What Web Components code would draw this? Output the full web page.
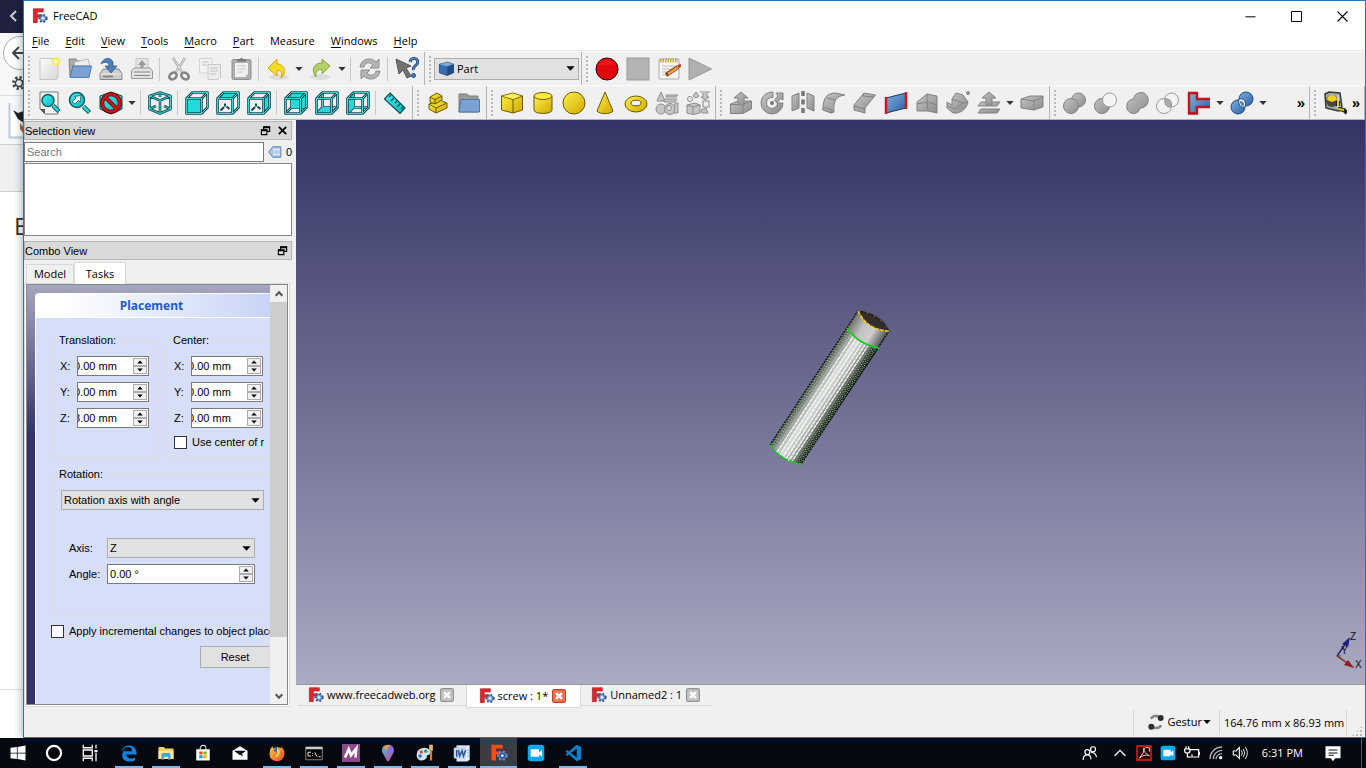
<!DOCTYPE html>
<html lang="en">
<head>
<meta charset="utf-8">
<title>FreeCAD</title>
<style>
html,body{height:100%;margin:0;overflow:hidden}
body{font:11px/14px "Liberation Sans",Arial,sans-serif;color:#000;background:#fff}
</style>
</head>
<body>
<cad-desktop></cad-desktop>
<script>
const RESET='*{box-sizing:border-box}button,input,select{font:inherit;color:inherit;margin:0}button{background:none;border:0;padding:0}';
const define=(name,html,setup)=>customElements.define(name,class extends HTMLElement{
  constructor(){
    super();
    const root=this.attachShadow({mode:'open'});
    root.innerHTML='<style>'+RESET+(typeof html==='function'?html(this):html);
    if(setup)setup(this,root);
  }
});

/* ---------- icon library, 24 x 24 grid ---------- */
const grad=(id,a,b)=>`<linearGradient id="${id}" x1="0" y1="0" x2="1" y2="1"><stop stop-color="${a}"/><stop offset="1" stop-color="${b}"/></linearGradient>`;
const DEFS='<defs>'+grad('te','#3ff0f0','#12b5bd')+grad('gr','#c4c4c4','#8c8c8c')+grad('gl','#fbfbfb','#d8d8d8')+grad('ye','#fff04a','#d0a800')+grad('bl','#7fb0e4','#2c5f9f')+grad('fx','#ffd22e','#f0403a')+grad('p3','#29c7f0','#e83a86')+'</defs>';
const wire=d=>`<path d="${d}" fill="none" stroke="#0c4c50" stroke-width="2.600" stroke-linejoin="round"/><path d="${d}" fill="none" stroke="#4fe0e2" stroke-width=".9"/>`;
const cubeWire='M1.500 7.500H16.500V22.500H1.500ZM16.500 7.500L22.500 1.500H7.500L1.500 7.500M22.500 1.500V16.500L16.500 22.500';
const cubeBack='M7.500 1.500V16.500H22.500M7.500 16.500L1.500 22.500';
const cube=(face,back)=>`${back?wire(cubeBack):''}<path d="${face}" fill="#26d7dc"/>${back?'':`<path d="M17.500 9L21.500 5V15.500L17.500 20Z" fill="#f4f4f4"/>`}${back?'':`<path d="${face}" fill="#26d7dc"/>`}${wire(cubeWire)}`;
const dots='<path d="M4.500 19.500L8 16M9 15.500V12.500M10.500 15.500L13.500 18" stroke="#0c4c50" stroke-width="2"/>';
const gear=(cx,cy,r,fill,st)=>`<circle cx="${cx}" cy="${cy}" r="${r}" fill="none" stroke="${st}" stroke-width="4" stroke-dasharray="2.400 2.300"/><circle cx="${cx}" cy="${cy}" r="${r-.5}" fill="${fill}" stroke="${st}"/><circle cx="${cx}" cy="${cy}" r="1.800" fill="#fff"/>`;
const fc=gearFill=>`<path d="M2 1H17V6H8V10H14V14H8V22H2Z" fill="#e0252b" stroke="#8e1216" stroke-width=".8"/>`+gear(16.5,15.5,5,gearFill,'#33568c');
const G='fill="url(#gr)" stroke="#828282"', Y='fill="url(#ye)" stroke="#6b5b00"';
const magn=(x,y,r)=>`<path d="M${x+r-1} ${y+r-1}L${x+r+5} ${y+r+5}" stroke="#0c4c50" stroke-width="4.500"/><path d="M${x+r-1} ${y+r-1}L${x+r+4.5} ${y+r+4.5}" stroke="#2cd4d8" stroke-width="2.500"/><circle cx="${x}" cy="${y}" r="${r}" fill="url(#te)" stroke="#0c5c60" stroke-width="1.500"/>`;
const ICONS={
new:'<path d="M3 1.500H21V21L19 22.500H3Z" fill="url(#gl)" stroke="#c6c6c6"/><circle cx="19" cy="4.500" r="4.500" fill="#f7ef48" opacity=".75"/><circle cx="19" cy="4.500" r="2" fill="#fffbb0"/>',
open:'<path d="M1 2H8L10 4H20V8H5L3 20H2Z" fill="#aaa" stroke="#858585"/><path d="M7 5L20 2L22 9H6Z" fill="#eee" stroke="#bbb"/><path d="M5 9H23.500L21 20.500H2Z" fill="#7ba2d2" stroke="#5079ad"/>',
save:'<path d="M4 12H20L23 17V22.500H1V17Z" fill="#ccc" stroke="#888"/><path d="M1.500 17H22.500" stroke="#eee"/><path d="M4 19.500H14" stroke="#888" stroke-width="2"/><path d="M2 7C4 1 11 -1 14 5V9H18L12 16L6 9H10C10 5 6 4 2 7Z" fill="#4f7fbd" stroke="#2e568c" stroke-width=".8"/>',
print:'<path d="M6 1.500H18V12H6Z" fill="#e4e4e4" stroke="#c4c4c4"/><path d="M12 3L8 8H10.500V11H13.500V8H16Z" fill="#999"/><path d="M4 11H20L22.500 14V21.500H1.500V14Z" fill="#e2e2e2" stroke="#999"/><path d="M4 15H20M4 18.500H20" stroke="#888" stroke-width="1.200"/>',
cut:'<path d="M6 1L15 15M18 1L9 15" stroke="#aaa" stroke-width="2.500"/><path d="M6 1L15 15M18 1L9 15" stroke="#e3e3e3" stroke-width="1"/><g fill="none" stroke="#858585" stroke-width="2.600"><ellipse cx="6" cy="19" rx="4" ry="3" transform="rotate(-35 6 19)"/><ellipse cx="18" cy="19" rx="4" ry="3" transform="rotate(35 18 19)"/></g>',
copy:'<path d="M1.500 1.500H14V16H1.500Z" fill="#f2f2f2" stroke="#d4d4d4"/><path d="M10 7.500H22.500V20L20 22.500H10Z" fill="#ececec" stroke="#c8c8c8"/><path d="M4 5H11M4 8H9M12 11H20M12 14H20M12 17H18" stroke="#d0d0d0" stroke-width="1.500"/>',
paste:'<rect x="3" y="2.500" width="19" height="20" rx="1.500" fill="#aeaeae" stroke="#8f8f8f"/><path d="M6 6H19V17L16 20H6Z" fill="#f1f1f1"/><path d="M8 9H17M8 12H17M8 15H14" stroke="#ccc"/><path d="M8 4.500H17V2H14L12.500 .5L11 2H8Z" fill="#777"/>',
undo:'<ellipse cx="13" cy="20" rx="10" ry="3" fill="#bbb" opacity=".35"/><path d="M2 11L11 2V7C19 7 21 16 15 21C17 15 15 13 11 13.500V19Z" fill="#f5dc28" stroke="#d9a400"/>',
redo:'<ellipse cx="11" cy="20" rx="10" ry="3" fill="#bbb" opacity=".35"/><path d="M21 9L13 2V6C4 6 2 14 7 20C6 14 9 12 13 12.500V17Z" fill="#b4d06a" stroke="#83a83d"/>',
refresh:'<g fill="#b5b5b5" stroke="#8e8e8e"><path d="M2 10C3 1 14 0 18 5L21 2V11H12L15 8C11 4 7 6 6 10Z"/><path d="M22 14C21 23 10 24 6 19L3 22V13H12L9 16C13 20 17 18 18 14Z"/></g>',
what:'<path d="M1 2L16 9L11 11L16 19L12 21L8 13L4 17Z" fill="#71756f" stroke="#555"/><path d="M15 5C16 -.5 24 1 22.500 6C22 9 18 8 18.500 13" fill="none" stroke="#20477a" stroke-width="3"/><path d="M15 5C16 -.5 24 1 22.500 6C22 9 18 8 18.500 13" fill="none" stroke="#5d8bc5" stroke-width="1.200"/><circle cx="18.500" cy="18.500" r="2" fill="#477bb8" stroke="#20477a"/>',
part:'<path d="M2 6L14 3L22 6V18L13 22L2 18Z" fill="#356daf" stroke="#16335a"/><path d="M2 6L14 3L22 6L13 9Z" fill="#78a8dc"/><path d="M13 9L22 6V18L13 22Z" fill="#234b80"/>',
record:'<circle cx="12" cy="12" r="11" fill="#e1080d" stroke="#250000" stroke-width="1"/><path d="M3 9C6 0 18 0 21 9C15 6 9 8 3 9Z" fill="#f33" opacity=".35"/>',
stop:'<rect x="1" y="1" width="22" height="22" fill="#b3b3b3" stroke="#999"/>',
macro:'<rect x="2" y="2" width="20" height="20" rx="1" fill="#f5f5f2" stroke="#aaa"/><path d="M3 3.500H21" stroke="#c7ad24" stroke-width="4" stroke-dasharray="1.500 1"/><path d="M5 9H18M5 12H16M5 15H14M5 18H12" stroke="#bbb"/><path d="M9 18L21 10" stroke="#774315" stroke-width="4"/><path d="M11 17L22 9.500" stroke="#f19b42" stroke-width="2.500"/><path d="M21 10L24 8" stroke="#c33" stroke-width="3"/>',
play:'<path d="M1 1L23.500 12L1 23Z" fill="#b0b0b0" stroke="#999"/>',
fit:'<path d="M3 1H21V23H8L3 18Z" fill="#f4f4f4" stroke="#777"/><path d="M3 18H8V23Z" fill="#555"/>'+magn(11,9.5,6),
fitsel:magn(9,9,7.5)+'<path d="M4 11L8 7L6.500 5.500L13 4.500L12 11L10.500 9.500L7 13Z" fill="#fff" stroke="#0c5c60" stroke-width=".8"/>',
style:'<path d="M12 1L23 5V18L12 23L1 18V5Z" fill="url(#te)" stroke="#0c4c50"/><circle cx="12" cy="12" r="8.800" fill="none" stroke="#5e0808" stroke-width="4"/><path d="M6 6L18 18" stroke="#5e0808" stroke-width="4"/><circle cx="12" cy="12" r="8.800" fill="none" stroke="#d31217" stroke-width="2.500"/><path d="M6 6L18 18" stroke="#d31217" stroke-width="2.500"/>',
axo:wire('M12 1.500L22.500 5V18L12 22.500L1.500 18V5ZM1.500 5L12 9.500L22.500 5M12 9.500V22.500M12 1.500V6M1.500 18L8 15M22.500 18L16 15'),
front:cube('M2 7.500H16V22H2Z'),
top:cube('M2 7.500L8 2H22L16 7.500Z')+dots,
right:cube('M16.500 7.500L22.500 1.500V16.500L16.500 22.500Z')+dots,
rear:cube('M7.500 2H22V16.500H7.500Z',1),
bottom:cube('M2 22L8 16.500H22L16 22Z',1),
left:cube('M2 7.500L8 2V16.500L2 22Z',1),
ruler:'<path d="M7 2L22 17L17 22.500L1.500 8Z" fill="url(#te)" stroke="#0c4c50" stroke-width="1.200"/><path d="M8 4L6 6M11 7L8 10M14 10L12 12M17 13L14 16M20 16L18 18" stroke="#0c4c50" stroke-width="1.300"/>',
group:`<g ${Y}><path d="M3 13L14 9L21 12V17L10 22L3 18Z"/><path d="M3 13L10 17V22M10 17L21 12" fill="none"/><path d="M4 6L11 2L16 5V9L9 13L4 11Z"/><path d="M4 6L9 8.500V13M9 8.500L16 5" fill="none"/></g>`,
folder:'<path d="M2 3H10L12 5H21V21H2Z" fill="#999" stroke="#7e7e7e"/><path d="M4 8.500H22.500V21H2L4 8.500Z" fill="#7ba2d2" stroke="#4f78ac"/>',
box:`<g ${Y}><path d="M1.500 5L13 2L22.500 5V19L13 22L1.500 19Z"/><path d="M1.500 5L13 8.500V22M13 8.500L22.500 5" fill="none"/></g><path d="M2.500 5L13 2.500L21 5L13 8Z" fill="#ffee55"/>`,
cyl:`<path d="M3 5V19C3 23.500 21 23.500 21 19V5" ${Y}/><ellipse cx="12" cy="5" rx="9" ry="3.500" fill="#ffea3c" stroke="#6b5b00"/>`,
sphere:`<circle cx="12" cy="12" r="11" ${Y}/>`,
cone:`<path d="M12 1L20 20C18 23.500 6 23.500 4 20Z" ${Y}/>`,
torus:`<ellipse cx="12" cy="13" rx="11" ry="8" ${Y}/><ellipse cx="12" cy="12" rx="5" ry="2.800" fill="#f5f5f5" stroke="#6b5b00"/>`,
prims:`<g fill="#c6c6c6" stroke="#909090"><path d="M6 1L10 10H2Z"/><path d="M11 4H23L21 6H11Z"/><path d="M9 8H22L20 11H9Z"/><circle cx="6" cy="18" r="5"/><circle cx="15" cy="18" r="5.500"/><circle cx="14" cy="17" r="2.500" fill="#ddd"/><path d="M20 12H23V22H19Z"/></g>`,
shapes:`<g fill="#c6c6c6" stroke="#8c8c8c"><path d="M1 14L9 12L14 14V22L7 23.500L1 22Z"/><path d="M1 14L7 16V23M7 16L14 14" fill="none"/><path d="M14 1H24M17 2V6H15L19 9L23 6H21V2"/><rect x="17" y="10" width="6" height="6" fill="#eee"/><path d="M15 19L20 17L22 22L16 22Z"/><circle cx="4" cy="8" r="2.500" fill="#eee"/><path d="M7 5L10 1L13 5L10 7Z"/></g>`,
extrude:`<g ${G}><path d="M1.500 13L9 10H22.500V18L14 22.500H1.500Z"/><path d="M1.500 13.500H14V22M14 13.500L22 10" fill="none"/><path d="M12 1L19 7H15V14H9V7H5Z"/></g>`,
revolve:`<path d="M13 1V6.500A5.500 5.500 0 1 0 17.500 12H23A11 11 0 1 1 13 1Z" ${G}/><path d="M16 2H23V9L20.500 7.500L17 12L14.500 9L18 5Z" ${G}/><circle cx="12" cy="12" r="2" fill="#777"/>`,
mirror:`<g ${G}><path d="M1 5L8 2V17L1 20Z"/><path d="M16 2L23 5V20L16 17Z"/></g><path d="M12 0V24" stroke="#777" stroke-width="3.500" stroke-dasharray="5 3.500"/>`,
fillet:`<g ${G}><path d="M1 19C1 6 5 2 14 2L23 4C14 5 11 10 12 21L9 22Z"/><path d="M1 16L10 19V22L1 19ZM5 7L14 9" /></g>`,
chamfer:`<g ${G}><path d="M1 14L11 2L22.500 4L12 17V22L1 19Z"/><path d="M1 15L12 18M11 2L10 5L21 6" fill="none"/></g>`,
ruled:'<path d="M2 7L22 2V17L2 22Z" fill="url(#bl)" stroke="#1b3960"/><path d="M2 6V23M22 1V18" stroke="#d4141a" stroke-width="2.500"/>',
loft:`<g ${G}><path d="M2 11L12 3L22 5V22L13 20H2Z"/><path d="M12 3V11L22 14M2 13L12 11L13 20" fill="none"/></g>`,
sweep:`<g ${G}><path d="M6 8L10 2L17 4L22 11C21 18 14 23 7 22L1 17V11L6 14Z"/><path d="M6 8L17 12L22 11M1 15L9 18L17 12" fill="none"/><circle cx="22" cy="2" r="1.500"/></g>`,
offset:`<g ${G}><path d="M4 11H23L20 15H1ZM4 18H23L20 22H1Z"/><path d="M12 1L19 7H15V14H9V7H5Z"/></g>`,
thick:`<g ${G}><path d="M1 8L10 5H23V16L14 19L1 17Z"/><path d="M1 8L14 10V19M14 10L23 6" fill="none"/></g>`,
boolean:`<circle cx="15.500" cy="9" r="7" ${G}/><circle cx="8" cy="15" r="7.500" ${G}/>`,
bcut:`<circle cx="8" cy="15" r="7.500" ${G}/><circle cx="15.500" cy="9" r="7" fill="#f5f5f5" stroke="#999"/>`,
fuse:`<path d="M2 14C0 23 13 26 15 17C24 17 26 6 19 2C13 0 8 5 9 8C5 8 2 11 2 14Z" ${G}/>`,
common:`<circle cx="15.500" cy="9" r="7" fill="#f3f3f3" stroke="#999"/><circle cx="8" cy="15" r="7.500" fill="#f3f3f3" stroke="#999"/><path d="M9 8C14 7 17 12 15 16C10 17 8 12 9 8Z" fill="#aaa" stroke="#999"/>`,
join:'<path d="M2 2H10V8H23V16H10V23H2Z" fill="url(#bl)"/><path d="M2 1V23M1 2H11M1 22.500H11M10 2V8H23M10 23V16H23" fill="none" stroke="#c51118" stroke-width="2.400"/>',
split:'<g fill="url(#bl)" stroke="#204a7e"><circle cx="16" cy="8" r="7"/><circle cx="8" cy="16" r="7"/></g><path d="M9 8C14 7 17 11 15 16C10 17 8 13 9 8Z" fill="#fff" stroke="#204a7e"/><path d="M10 10C14 10 14 13 14 15C11 15 10 13 10 10Z" fill="#4e83bd"/>',
tape:'<path d="M2 3L6 1L17 2L19 16L15 20L3 17Z" fill="#a6aaa4" stroke="#343832" stroke-width="1.500"/><circle cx="9" cy="10" r="6" fill="#45493f"/><path d="M4 9A5 5 0 0 1 14 9L9 11Z" fill="#edd11c"/><path d="M15 4V17" stroke="#dedede" stroke-width="1.500"/><path d="M15 10V15M15 18L21 19L24 22" stroke="#222" stroke-width="4"/><path d="M15 10V15M15 18L21 19" stroke="#e6c913" stroke-width="2"/>',
freecad:fc('#7fa8df'), freecadDark:'<path d="M2 1H17V6H8V10H14V14H8V22H2Z" fill="#ff4a14"/>'+gear(16.5,15.5,5,'#274d8d','#5f93dd'),
erase:'<path d="M1 12L8 3H22V21H8Z" fill="#a8c6e8" stroke="#557ba8" stroke-width="1.500"/><path d="M10 7L19 17M19 7L10 17" stroke="#fff" stroke-width="4"/><path d="M11 8L18 16M18 8L11 16" stroke="#6b92be" stroke-width="1.500"/>',
gesture:'<path d="M4 7Q11 0 17 5M20 17Q15 23 7 20" fill="none" stroke="#888" stroke-width="4"/><circle cx="19" cy="6" r="4.500" fill="#2b3132"/><circle cx="5" cy="19" r="4.500" fill="#2b3132"/>',
win:'<path d="M2 5L10.500 4V11.500H2ZM11.500 4L22 2V11.500H11.500ZM2 12.500H10.500V20L2 19ZM11.500 12.500H22V22L11.500 20Z" fill="#fff"/>',
cortana:'<circle cx="12" cy="12" r="8.500" fill="none" stroke="#fff" stroke-width="2.600"/>',
tasks:'<path d="M3 1V5H15V1M3 23V19H15V23M3 8H15V16H3ZM20 1V6M20 12V23" fill="none" stroke="#fff" stroke-width="1.700"/><path d="M18 8H22V11H18Z" fill="#fff"/>',
edge:'<path d="M2 11C3 -1 21 -1 22 11V14H8C9 20 16 20 20 18V22C10 26 2 21 3 14C4 9 8 6 11 6C7 7 6 9 6 9.500H16C16 2 6 2 2 11Z" fill="#0b82df"/>',
explorer:'<path d="M2 4H9L11 6H22V20H2Z" fill="#f5cf5d"/><path d="M2 9H22V20H2Z" fill="#ffe594"/><path d="M6 21V14Q6 12 8 12H16Q18 12 18 14V21H15V17H9V21Z" fill="#3ea7e2"/>',
store:'<path d="M8 7Q9 1 12 2Q16 1 16 7" fill="none" stroke="#ddd" stroke-width="1.500"/><path d="M3 7H21V22H3Z" fill="#fff"/><path d="M7 10H11.500V14H7Z" fill="#f25022"/><path d="M12.500 10H17V14H12.500Z" fill="#7fba00"/><path d="M7 15H11.500V19H7Z" fill="#00a4ef"/><path d="M12.500 15H17V19H12.500Z" fill="#ffb900"/>',
mail:'<path d="M2 9L12 3L22 9V21H2Z" fill="#fff"/><path d="M4 9H20L12 15Z" fill="#080b12"/><path d="M10 12L16 17L14 11Z" fill="#080b12"/>',
firefox:'<path d="M3 7L6 3L7 6Q13 2 18 6L17 3Q23 8 22 14Q20 23 12 23Q2 22 2 13Z" fill="url(#fx)"/><path d="M9 3Q18 6 16 14Q12 20 7 15Q14 16 11 10H7Q10 6 9 3Z" fill="#3563bf"/><path d="M12 5Q18 8 15 15Q12 19 8 16Q14 14 12 10Z" fill="#ffd328"/>',
cmd:'<path d="M1 4H23V21H1Z" fill="#050505" stroke="#aaa"/><path d="M1 5.500H23" stroke="#ccc" stroke-width="3"/><path d="M8 11H4V16H8M10 12V13M10 15V16M13 11L16 17M18 17H21" fill="none" stroke="#fff" stroke-width="1.200"/>',
mm:'<path d="M0 0H24V24H0Z" fill="#8c4b88"/><path d="M4 18L9 7L12 15L19 6L18 18" fill="none" stroke="#fff" stroke-width="3.500"/>',
paint3d:'<path d="M12 1C20 1 21 9 18 14L13 23H11L6 14C2 8 4 1 12 1Z" fill="url(#p3)"/><path d="M12 1C20 1 21 9 18 14L12 10Z" fill="#8c6bf0"/><path d="M5 4Q9 0 15 2L10 9Z" fill="#f89932" opacity=".8"/>',
paint:'<path d="M1 14Q1 6 11 5Q20 6 19 12Q18 15 15 15L14 19Q9 24 4 21Q0 18 1 14Z" fill="#cfe4f5"/><circle cx="7" cy="10.500" r="2.300" fill="#e43"/><circle cx="13" cy="9.500" r="2.300" fill="#2a9d4d"/><circle cx="5.500" cy="16" r="2.300" fill="#2671cc"/><path d="M20 1V9" stroke="#e3b37b" stroke-width="5"/><path d="M20 9V22" stroke="#d58025" stroke-width="3"/>',
word:'<path d="M5 2H22V21L19 23H5Z" fill="#e9f0fa" stroke="#8eabd7"/><path d="M1 5L17 3V21L1 19Z" fill="#c4d5ef"/><path d="M4 8V17H6V8Z" fill="#2b569b"/><path d="M7 8L9 16L12 9L14 16L17 8" fill="none" stroke="#2b569b" stroke-width="2"/><path d="M19 8H21M19 12H21M19 16H21" stroke="#4774b7"/>',
zoom:'<rect x="1" y="1" width="22" height="22" rx="4" fill="#0da9ed"/><path d="M5 7H16V11L20 8V17L16 14V17H5Z" fill="#fff"/>',
code:'<path d="M17 1L23 4V20L17 23L2 10L4 8L17 18V6L4 16L2 14Z" fill="#0a80cf"/>',
people:'<g fill="none" stroke="#fff" stroke-width="1.700"><circle cx="9" cy="10" r="3.500"/><path d="M3 21Q3 14 9 14Q14 14 14 20"/><circle cx="17" cy="6" r="3.500"/><path d="M14 11Q20 9 22 17"/></g>',
up:'<path d="M4 16L12 8L20 16" fill="none" stroke="#fff" stroke-width="2"/>',
acro:'<path d="M1.500 1.500H22.500V22.500H1.500Z" fill="#220507" stroke="#f0230f" stroke-width="2"/><path d="M5 20Q13 12 12 4Q12 13 20 16Q12 13 5 20ZM14 4H20V10" fill="none" stroke="#f0c4bd" stroke-width="1.500"/>',
battery:'<path d="M7 7H22V18H7" fill="none" stroke="#fff" stroke-width="1.800"/><path d="M3 2V6M7 2V6M1 6H9V9Q9 12 5 12Q1 12 1 9ZM5 12V18H8M23 10V15M12 14V17" fill="none" stroke="#fff" stroke-width="1.800"/>',
wifi:'<g fill="none" stroke="#bbb" stroke-width="2"><path d="M3 21A18 18 0 0 1 21 3"/><path d="M8 21A13 13 0 0 1 21 8"/><path d="M12 21A9 9 0 0 1 21 13"/></g><circle cx="19" cy="19" r="2.500" fill="#fff"/>',
volume:'<path d="M2 9H6L11 4V20L6 15H2Z" fill="none" stroke="#fff" stroke-width="1.700"/><path d="M14 8Q17 12 14 16M17 6Q21 12 17 18M20 3Q26 12 20 21" fill="none" stroke="#ddd" stroke-width="1.500"/>',
note:'<path d="M2 3H22V19H15L12 23L9 19H2Z" fill="#fff"/><path d="M6 8H18M6 12H18M6 15H13" stroke="#111" stroke-width="1.400"/>',
min:'<path d="M4 12.500H20" stroke="#000" stroke-width="1.600"/>',
max:'<path d="M4 4H20V20H4Z" fill="none" stroke="#000" stroke-width="1.600"/>',
close:'<path d="M4 4L20 20M20 4L4 20" stroke="#000" stroke-width="1.700"/>',
closeBold:'<path d="M4 4L20 20M20 4L4 20" stroke="#000" stroke-width="4"/>',
float:'<path d="M8 9V4H21V14H16M3 11H15V21H3Z" fill="none" stroke="#000" stroke-width="2.500"/><path d="M7 5H22M2 11.500H16" stroke="#000" stroke-width="4"/>',
tabx:'<rect x="1" y="1" width="22" height="22" rx="3" fill="#c3c3c3" stroke="#929292" stroke-width="2"/><path d="M7 7L17 17M17 7L7 17" stroke="#fff" stroke-width="4"/>',
tabxOn:'<rect x="1" y="1" width="22" height="22" rx="3" fill="#e87a56" stroke="#c9402b" stroke-width="2"/><path d="M7 7L17 17M17 7L7 17" stroke="#fff" stroke-width="4"/>',
tri:'<path d="M1 6H23L12 18Z" fill="currentColor"/>', triUp:'<path d="M1 18H23L12 6Z" fill="currentColor"/>',
scUp:'<path d="M4 16L12 8L20 16" fill="none" stroke="#555" stroke-width="5"/>', scDown:'<path d="M4 8L12 16L20 8" fill="none" stroke="#555" stroke-width="5"/>'
};
customElements.define('cad-icon',class extends HTMLElement{
  connectedCallback(){
    if(this.shadowRoot)return;
    const s=this.getAttribute('size')||24;
    this.attachShadow({mode:'open'}).innerHTML=`<style>:host{display:block;flex:none;width:${s}px;height:${s}px}svg{display:block}</style><svg width="${s}" height="${s}" viewBox="0 0 24 24" aria-hidden="true">${DEFS}${ICONS[this.getAttribute('name')]}</svg>`;
  }
});

/* ---------- tool bars ---------- */
const readable=n=>n.charAt(0).toUpperCase()+n.slice(1);
customElements.define('tool-bar',class extends HTMLElement{
  connectedCallback(){
    if(this.shadowRoot)return;
    const items=(this.getAttribute('items')||'').split(' ').filter(Boolean).map(t=>{
      if(t==='|')return '<i class="sep"></i>';
      const drop=t.endsWith('+'),n=t.replace('+','');
      return `<button class="tool" aria-label="${readable(n)}"><cad-icon name="${n}"></cad-icon></button>`+(drop?`<button class="drop" aria-label="${readable(n)} options"><cad-icon name="tri" size="8"></cad-icon></button>`:'');
    }).join('');
    this.attachShadow({mode:'open'}).innerHTML=`<style>${RESET}
    :host{display:flex;align-items:center;height:34px;padding-right:2px;border-right:1px solid #b4b4b4;border-bottom:1px solid #b4b4b4;color:#333}
    :host([last]){border-right:0}
    .grip{flex:none;width:9px;height:26px;background:linear-gradient(#b8b8b8 50%,transparent 50%) 4px 0/2px 4px repeat-y}
    .tool{flex:none;width:31px;height:32px;display:grid;place-items:center}
    .drop{flex:none;width:12px;height:32px;display:grid;place-items:center}
    .sep{flex:none;width:1px;height:24px;margin:0 3px 0 2px;background:#c8c8c8}
    .more{margin-left:auto;font:700 15px/20px "Liberation Sans",sans-serif;width:12px;color:#000}
    </style><i class="grip"></i>${items}<slot></slot>${this.hasAttribute('more')?'<button class="more" aria-label="More tools">»</button>':''}`;
  }
});

/* ---------- form controls ---------- */
customElements.define('cad-select',class extends HTMLElement{
  connectedCallback(){
    if(this.shadowRoot)return;
    const ic=this.getAttribute('icon');
    this.attachShadow({mode:'open'}).innerHTML=`<style>${RESET}
    :host{display:grid;position:relative;height:20px;color:#000}
    select{appearance:none;width:100%;height:100%;border:1px solid #adadad;border-radius:0;background:#e1e1e1;padding:0 20px 0 ${ic?22:2}px}
    .a{position:absolute;right:4px;top:0;bottom:0;display:grid;place-items:center;pointer-events:none}
    .i{position:absolute;left:4px;top:0;bottom:0;display:grid;place-items:center;pointer-events:none}
    </style><select aria-label="${this.getAttribute('label')}"><option>${this.getAttribute('value')}</option></select>${ic?`<span class="i"><cad-icon name="${ic}" size="17"></cad-icon></span>`:''}<span class="a"><cad-icon name="tri" size="9"></cad-icon></span>`;
  }
});
customElements.define('spin-box',class extends HTMLElement{
  connectedCallback(){
    if(this.shadowRoot)return;
    this.attachShadow({mode:'open'}).innerHTML=`<style>${RESET}
    :host{display:flex;height:20px;border:1px solid #7a7a7a;background:#fff;padding:1px}
    input{flex:1;min-width:0;width:0;border:0;outline:0;padding:0 0 0 1px;background:none}
    :host([clipped]){padding-left:0}
    :host([clipped]) input{padding:0;text-indent:-4px}
    .b{display:grid;grid-template-rows:8px 8px;width:14px}
    button{display:grid;place-items:center;background:#f0f0f0;border:1px solid #acacac;overflow:hidden}
    </style><input aria-label="${this.getAttribute('label')}" value="${this.getAttribute('value')}"><span class="b"><button aria-label="Increase"><cad-icon name="triUp" size="6"></cad-icon></button><button aria-label="Decrease"><cad-icon name="tri" size="6"></cad-icon></button></span>`;
  }
});
define('check-field',`:host{display:block}label{display:flex;align-items:center;gap:5px;white-space:nowrap;height:14px}
input{appearance:none;flex:none;width:13px;height:13px;border:1px solid #333;background:#fff}</style><label><input type="checkbox"><slot></slot></label>`);
define('group-box',`:host{display:block;min-width:0}fieldset{margin:0;height:100%;min-width:0;border:1px solid #dcdcdc;padding:0 9px 0 8px}
legend{padding:0;margin-left:-1px;line-height:14px}</style><fieldset><legend><slot name="title"></slot></legend><slot></slot></fieldset>`);

/* ---------- dock panels ---------- */
define('dock-title',`:host{display:flex;align-items:center;gap:6px;height:19px;padding:0 3px 0 0;border:1px solid #b5b5b5;background:#d9d9d9}
h2{margin:0;flex:1;font:inherit}</style><h2><slot></slot></h2><slot name="actions"></slot>`);
define('selection-view',`:host{display:block}
.s{display:flex;align-items:center;gap:4px;height:20px;margin:2px 0 1px}
input{flex:1;min-width:0;height:20px;border:1px solid #7a7a7a;padding:0 2px}input::placeholder{color:#777;opacity:1}
.list{height:73px;border:1px solid #828790;background:#fff}
</style><dock-title>Selection view<button slot="actions" aria-label="Float"><cad-icon name="float" size="11"></cad-icon></button><button slot="actions" aria-label="Close"><cad-icon name="closeBold" size="11"></cad-icon></button></dock-title>
<div class="s"><input placeholder="Search" aria-label="Search"><button aria-label="Clear search"><cad-icon name="erase" size="14"></cad-icon></button><output>0</output></div><div class="list"></div>`);
define('placement-panel',`:host{display:block;width:256px;min-height:100%;border-left:1px solid #fff;background:#d6dff7;border-radius:4px 4px 0 0}
h3{margin:0;height:25px;padding-right:24px;border-top:1px solid #fff;border-bottom:1px solid #fff;border-radius:4px 4px 0 0;background:linear-gradient(90deg,#fff 10%,#c6d3f7 94%);font:700 12px/24px "Noto Sans",sans-serif;color:#215dc6;text-align:center}
.body{padding:15px 0 0 15px}
.pair{display:grid;grid-template-columns:108px 1fr;gap:6px;margin-bottom:8px}
.pair group-box{height:126px}
.rows{display:grid;grid-template-columns:13px 72px;gap:6px 4px;padding-top:9px;align-items:center}
.center{width:90px;overflow:hidden}
check-field{margin-top:7px}
.rot{height:148px}
.axis{display:grid;grid-template-columns:37px 148px;align-items:center;gap:6px 1px;margin:28px 0 0 9px}
.top{margin:9px 0 0 1px;width:203px}
.inc{margin-top:9px}
.reset{display:block;width:82px;height:22px;margin:8px 0 0 149px;padding-right:12px;border:1px solid #adadad;background:#e1e1e1}
</style><h3>Placement</h3><div class="body"><div class="pair">
<group-box><span slot="title">Translation:</span><div class="rows">X:<spin-box clipped label="Translation X" value="0.00 mm"></spin-box>Y:<spin-box clipped label="Translation Y" value="0.00 mm"></spin-box>Z:<spin-box clipped label="Translation Z" value="8.00 mm"></spin-box></div></group-box>
<group-box><span slot="title">Center:</span><div class="center"><div class="rows">X:<spin-box clipped label="Center X" value="0.00 mm"></spin-box>Y:<spin-box clipped label="Center Y" value="0.00 mm"></spin-box>Z:<spin-box clipped label="Center Z" value="0.00 mm"></spin-box></div><check-field>Use center of mass</check-field></div></group-box></div>
<group-box class="rot"><span slot="title">Rotation:</span><cad-select class="top" label="Rotation mode" value="Rotation axis with angle"></cad-select><div class="axis">Axis:<cad-select label="Axis" value="Z"></cad-select>Angle:<spin-box label="Angle" value="0.00 °"></spin-box></div></group-box>
<check-field class="inc">Apply incremental changes to object placement</check-field><button class="reset">Reset</button></div>`);
define('combo-view',`:host{display:flex;flex-direction:column;min-height:0}
.tabs{display:flex;align-items:flex-end;height:22px;margin-top:1px;padding-left:2px}
.tabs button{height:19px;width:48px;border:1px solid #d9d9d9;border-bottom:0;font:11px/16px "Open Sans","Noto Sans",sans-serif}
.tabs .on{height:22px;width:52px;background:#fff;margin-bottom:-1px;position:relative}
.page{flex:1;min-height:0;margin-right:2px;border:1px solid #dcdcdc;background:#fff;padding:0 1px 1px}
.area{display:flex;height:100%;border:1px solid #828790;overflow:hidden;background:linear-gradient(#a6a6bf,#333366 150px)}
.in{flex:1;min-width:0;overflow:hidden;padding:8px 0 0 8px}
.bar{flex:none;width:17px;display:flex;flex-direction:column;background:#f0f0f0}
.bar button{height:17px;display:grid;place-items:center}.thumb{flex:334;background:#cdcdcd}.rest{flex:50}
</style><dock-title>Combo View<button slot="actions" aria-label="Float"><cad-icon name="float" size="11"></cad-icon></button></dock-title>
<div class="tabs" role="tablist"><button role="tab">Model</button><button role="tab" class="on" aria-selected="true">Tasks</button></div>
<div class="page"><div class="area"><div class="in"><placement-panel></placement-panel></div><div class="bar"><button aria-label="Scroll up"><cad-icon name="scUp" size="10"></cad-icon></button><div class="thumb"></div><div class="rest"></div><button aria-label="Scroll down"><cad-icon name="scDown" size="10"></cad-icon></button></div></div></div>`);

/* ---------- 3D view ---------- */
let ribs='';
for(let i=1;i<16;i++){
  const t=(1-Math.cos(Math.PI*i/16))/2, dx=31*t, dy=19*t+5*Math.sin(Math.PI*t);
  const mid=t>.15&&t<.7;
  ribs+=`<path d="M${551+dx} ${208+dy}L${474+dx} ${325+dy}" stroke="${mid?'#f2fff2':'#98f098'}" stroke-width="${mid?1.3:1}" stroke-dasharray="${mid?'4 .6':'1 2'}" stroke-dashoffset="${i%3}"/>`;
}
define('cad-view',`:host{display:block;min-height:0;background:linear-gradient(#333365,#aaaac2);border-bottom:1px solid #999;overflow:hidden}svg{display:block;width:100%;height:100%}</style>
<svg viewBox="0 0 1069 564" role="img" aria-label="Screw model">
<defs><linearGradient id="m" gradientUnits="userSpaceOnUse" x1="513" y1="266" x2="542" y2="285"><stop stop-color="#4a4a4a"/><stop offset=".2" stop-color="#a0a0a0"/><stop offset=".45" stop-color="#dcdcdc"/><stop offset=".7" stop-color="#b0b0b0"/><stop offset=".9" stop-color="#505050"/><stop offset="1" stop-color="#1c1c1c"/></linearGradient>
<linearGradient id="h" gradientUnits="userSpaceOnUse" x1="556" y1="200" x2="587" y2="219"><stop stop-color="#707070"/><stop offset=".35" stop-color="#c0c0c0"/><stop offset=".65" stop-color="#cecece"/><stop offset="1" stop-color="#5a5a5a"/></linearGradient></defs>
<path d="M551 208L474 325Q486 341 505 344L583 228Q563 226 551 208Z" fill="url(#m)"/>
${ribs}
<path d="M551 208L562 191Q574 210 593 211L583 228Q563 226 551 208Z" fill="url(#h)"/>
<path d="M562 191Q584 194 593 211Q571 210 562 191Z" fill="#33302c"/>
<path d="M562 191L474 325M593 211L505 344" stroke="#151515" stroke-width="1.500" stroke-dasharray="2 1"/>
<path d="M562 191Q584 194 593 211" fill="none" stroke="#222" stroke-width="1.500"/>
<path d="M562 191Q571 210 593 211" fill="none" stroke="#ffcb16" stroke-width="1.500" stroke-dasharray="4 1"/><path d="M563 191Q583 194 593 211" fill="none" stroke="#ffcb16" stroke-dasharray="1 7"/>
<path d="M551 208Q562 224 583 228" fill="none" stroke="#14cc1c" stroke-width="1.800"/>
<path d="M474 325Q485 341 505 344" fill="none" stroke="#14cc1c" stroke-width="1.800" stroke-dasharray="4 1"/>
<path d="M1041 536L1052 520" stroke="#202080" stroke-width="1.500"/><path d="M1054 517L1046 524L1052 527Z" fill="#202080"/>
<path d="M1041 536L1057 547" stroke="#8b2025" stroke-width="1.500"/><path d="M1058 548L1048 545L1052 540Z" fill="#8b2025"/><path d="M1041 536H1045" stroke="#176a17"/>
<g font-family="Liberation Sans, sans-serif" font-size="10" fill="#111"><text x="1054" y="520">Z</text><text x="1045" y="534">Y</text><text x="1059" y="548">X</text></g>
</svg>`);
define('doc-tab',`:host{display:flex;align-items:center;gap:4px;height:21px;padding:0 12px 0 10px;border-bottom:1px solid #d9d9d9;font:11px/16px "Open Sans","Noto Sans",sans-serif;white-space:nowrap}
:host([on]){height:23px;background:#fff;border:1px solid #d9d9d9;border-top:0;padding:0 14px 0 12px}
button.l{display:flex;align-items:center;gap:3px}</style><button class="l"><cad-icon name="freecad" size="16"></cad-icon><slot></slot></button><slot name="x"></slot>`);

/* ---------- window ---------- */
const menu=['File','Edit','View','Tools','Macro','Part','Measure','Windows','Help'].map(m=>m==='Measure'?`<button>${m}</button>`:`<button><u>${m[0]}</u>${m.slice(1)}</button>`).join('');
define('cad-window',`:host{display:flex;flex-direction:column;min-width:0;border:1px solid #1979ca;background:#f0f0f0;box-shadow:0 0 9px #0006;position:relative}
.title{display:flex;align-items:center;height:30px;background:#fff;padding-left:8px;font:11px/16px "Open Sans","Noto Sans",sans-serif}
h1{font:inherit;margin:0;padding-left:5px;flex:1}.title button{width:46px;height:30px;display:grid;place-items:center}
nav{display:flex;height:20px;background:#fff;border-bottom:1px solid #e8e8e8;font:11px/19px "Open Sans","Noto Sans",sans-serif}
nav button{padding:0 8px}u{text-underline-offset:2px}
.bars{display:flex;height:34px;border-top:1px solid #fafafa}.bars tool-bar{flex:none}.bars .g{flex:1}
.part{width:145px;height:22px;font:11px/16px "Open Sans","Noto Sans",sans-serif}
.main{flex:1;min-height:0;display:grid;grid-template-columns:268px minmax(0,1fr);column-gap:4px}
.dock{display:flex;flex-direction:column;gap:5px;min-height:0;padding:2px 0 0}combo-view{flex:1}
.work{display:grid;grid-template-rows:minmax(0,1fr) 22px;min-height:0;padding-top:1px}
.tabs{display:flex;padding-left:2px}
footer{display:flex;align-items:center;justify-content:flex-end;height:30px;font:11px/16px "Open Sans","Noto Sans",sans-serif;padding-right:2px}
.nav{display:flex;align-items:center;gap:3px;border-left:1px solid #d4d4d4;height:25px;padding:0 8px 0 14px}
.nav button{display:flex;align-items:center;gap:1px}.pos{border:solid #d4d4d4;border-width:0 1px;padding:0 0 0 4px;width:128px;height:25px;line-height:25px;margin-right:4px;white-space:nowrap}
.size{align-self:flex-end;width:12px;height:12px;background:radial-gradient(circle,#bbb 1px,transparent 1px) 0 0/4px 4px;clip-path:polygon(100% 0,100% 100%,0 100%)}
</style>
<div class="title"><cad-icon name="freecad" size="16"></cad-icon><h1>FreeCAD</h1><button aria-label="Minimize"><cad-icon name="min" size="15"></cad-icon></button><button aria-label="Maximize"><cad-icon name="max" size="15"></cad-icon></button><button aria-label="Close"><cad-icon name="close" size="15"></cad-icon></button></div>
<nav aria-label="Main menu">${menu}</nav>
<div class="bars"><tool-bar items="new open save print | cut copy paste | undo+ redo+ | refresh | what"></tool-bar><tool-bar><cad-select class="part" icon="part" label="Workbench" value="Part"></cad-select></tool-bar><tool-bar class="g" last items="record stop macro play"></tool-bar></div>
<div class="bars"><tool-bar items="fit fitsel style+ | axo | front top right | rear bottom left | ruler"></tool-bar><tool-bar items="group folder"></tool-bar><tool-bar items="box cyl sphere cone torus prims shapes"></tool-bar><tool-bar items="extrude revolve mirror fillet chamfer ruled loft sweep offset+ thick"></tool-bar><tool-bar class="g" more items="boolean bcut fuse common join+ split+"></tool-bar><tool-bar more items="tape"></tool-bar></div>
<div class="main"><div class="dock"><selection-view></selection-view><combo-view></combo-view></div>
<div class="work"><cad-view></cad-view><div class="tabs"><doc-tab>www.freecadweb.org<button slot="x" aria-label="Close tab"><cad-icon name="tabx" size="14"></cad-icon></button></doc-tab><doc-tab on>screw : 1*<button slot="x" aria-label="Close tab"><cad-icon name="tabxOn" size="14"></cad-icon></button></doc-tab><doc-tab>Unnamed2 : 1<button slot="x" aria-label="Close tab"><cad-icon name="tabx" size="14"></cad-icon></button></doc-tab></div></div></div>
<footer><div class="nav"><cad-icon name="gesture" size="16"></cad-icon><button>Gestur<cad-icon name="tri" size="8"></cad-icon></button></div><div class="pos">164.76 mm x 86.93 mm</div><div class="size"></div></footer>`);

/* ---------- browser window behind ---------- */
define('back-window',`:host{display:flex;flex-direction:column;overflow:hidden;background:#fff;position:relative}
svg{display:block;flex:none}.mid{height:48px;background:#f0f0f2;border:solid #ccc;border-width:1px 0}
.e{font:24px/30px "Open Sans",sans-serif;color:#333;padding:19px 0 0 14px;flex:1}.foot{height:49px;border-top:1px solid #ddd}</style>
<svg width="24" height="144" viewBox="0 0 24 144" aria-hidden="true"><path d="M0 0H24V33H0Z" fill="#20203f"/><path d="M0 33H24V144H0Z" fill="#f8f8f9"/><path d="M16 11L11 16L16 21" fill="none" stroke="#ccc" stroke-width="2"/><circle cx="20" cy="53" r="16.500" fill="#fff" stroke="#aaa"/><path d="M13 53H24M19 47L13 53L19 59" fill="none" stroke="#444" stroke-width="2"/><circle cx="19" cy="83" r="5" fill="none" stroke="#444" stroke-width="4" stroke-dasharray="2 1.900"/><circle cx="19" cy="83" r="3.500" fill="#f8f8f9" stroke="#444" stroke-width="1.500"/><path d="M0 95.500H24" stroke="#ddd"/><path d="M9.500 103V137.500H24" fill="#fff" stroke="#b9cbdc" stroke-width="2"/><path d="M13 110L18 113L24 111V123L18 119Z" fill="#222"/><path d="M20 123L24 128V134L20 129Z" fill="#b75f3b"/></svg>
<div class="mid"></div><div class="e">E</div><div class="foot"></div>`);

/* ---------- task bar ---------- */
const apps=[['edge','Edge',1],['explorer','File Explorer',1],['store','Store',0],['mail','Mail',0],['firefox','Firefox',1],['cmd','Command Prompt',1],['mm','M',1],['paint3d','Paint 3D',1],['paint','Paint',1],['word','Word',1],['freecadDark','FreeCAD',2],['zoom','Zoom',0],['code','Code',1]];
define('task-bar',`:host{display:flex;align-items:center;height:30px;background:#060a10;color:#fff;font:11px/16px "Open Sans","Noto Sans",sans-serif;position:relative}
button{display:grid;place-items:center;height:30px;flex:none}.s{width:36px}.apps{display:flex;padding-left:2px}.apps button{width:37px}
.run{background:linear-gradient(#76b9ed,#76b9ed) center bottom/28px 2px no-repeat}.on{background:linear-gradient(#76b9ed,#76b9ed) center bottom/37px 2px no-repeat,#3b3d42}
.tray{margin-left:auto;display:flex;align-items:center}.tray button{width:24px}.tray .p{width:36px}.tray time{padding:0 14px 0 10px}.tray .n{width:32px}.edge{width:5px;height:30px;border-left:1px solid #555;margin-left:12px}
</style><button class="s" aria-label="Start"><cad-icon name="win" size="18"></cad-icon></button><button class="s" aria-label="Cortana"><cad-icon name="cortana" size="20"></cad-icon></button><button class="s" aria-label="Task view"><cad-icon name="tasks" size="18"></cad-icon></button>
<div class="apps">${apps.map(a=>`<button aria-label="${a[1]}" class="${['','run','on'][a[2]]}"><cad-icon name="${a[0]}" size="18"></cad-icon></button>`).join('')}</div>
<div class="tray"><button class="p" aria-label="People"><cad-icon name="people" size="17"></cad-icon></button>${[['up','Hidden icons'],['acro','Acrobat'],['zoom','Zoom'],['battery','Battery'],['wifi','Network'],['volume','Volume']].map(a=>`<button aria-label="${a[1]}"><cad-icon name="${a[0]}" size="16"></cad-icon></button>`).join('')}<time>6:31 PM</time><button class="n" aria-label="Notifications"><cad-icon name="note" size="18"></cad-icon></button><div class="edge"></div></div>`);
define('cad-desktop',`:host{display:grid;grid-template:minmax(0,1fr) 30px/23px minmax(0,1fr);height:100vh;overflow:hidden}task-bar{grid-column:1/3}</style><back-window></back-window><cad-window></cad-window><task-bar></task-bar>`);
</script>
</body>
</html>
